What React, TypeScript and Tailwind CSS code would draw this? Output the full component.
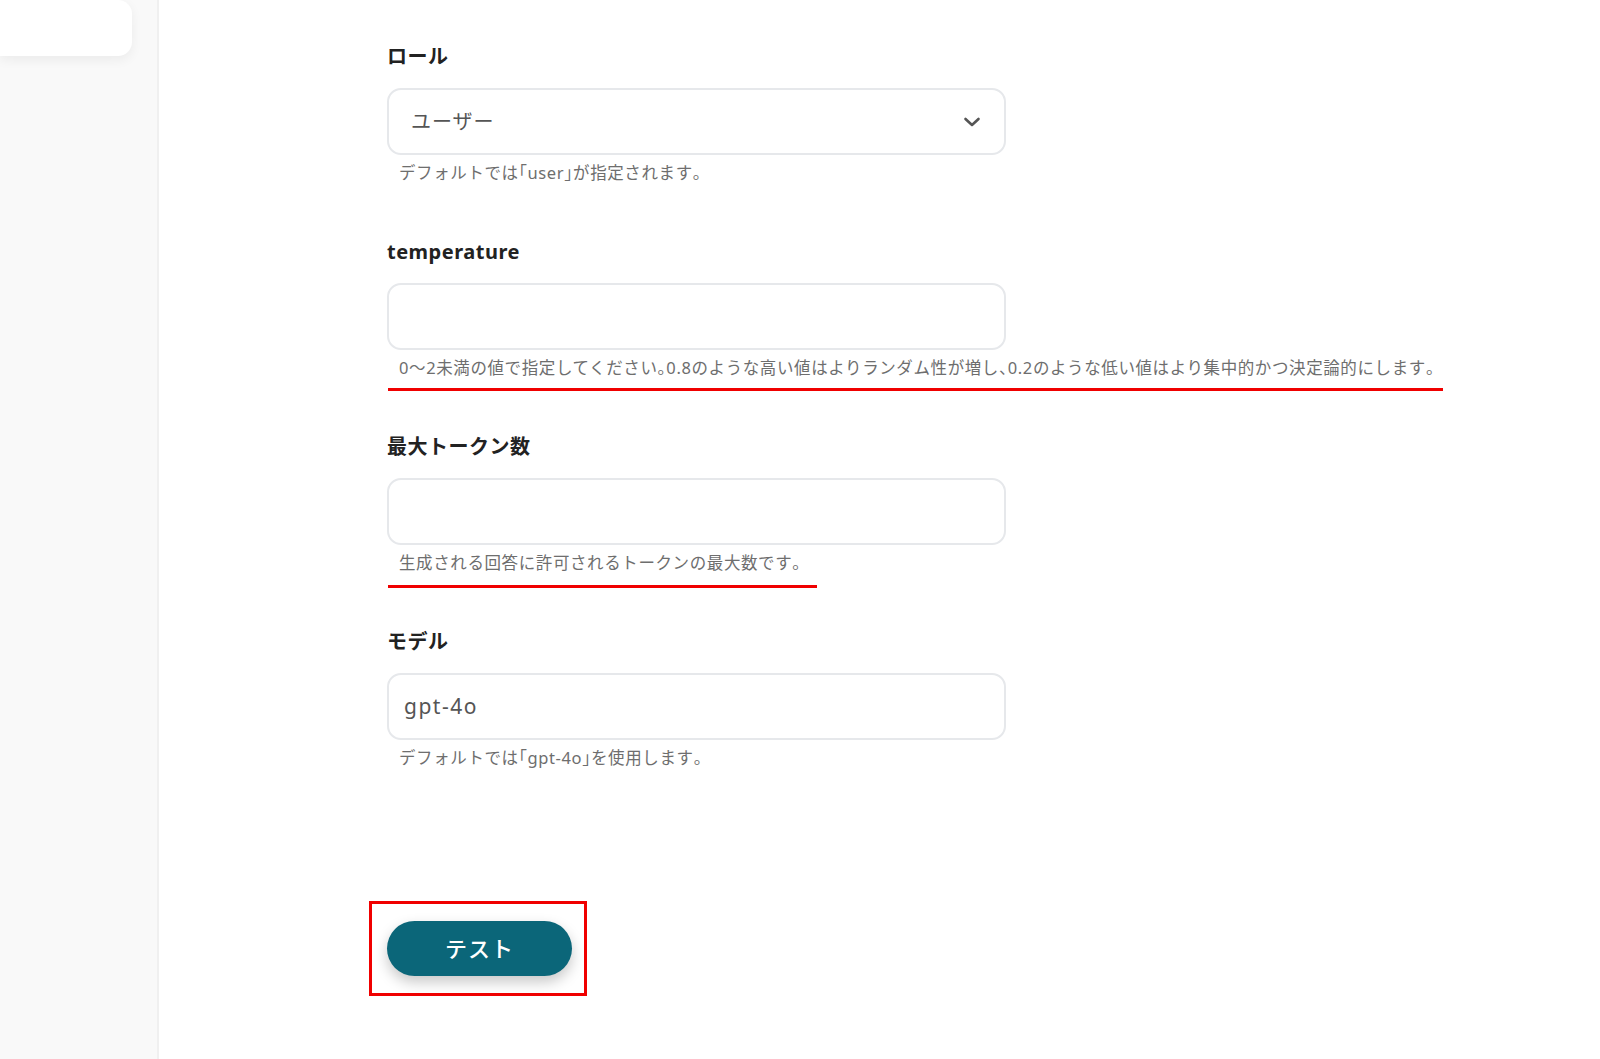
const font = { fontFamily: '"Noto Sans", "Noto Sans CJK JP", sans-serif' }

// full-width punctuation is set half-width, as in the reference
function Compact({ text }: { text: string }) {
  return (
    <>
      {text.split(/([「」。、])/).map((part, i) =>
        /^[「」。、]$/.test(part) ? (
          <span key={i} className="[font-feature-settings:'halt']">
            {part}
          </span>
        ) : (
          part
        )
      )}
    </>
  )
}

function Helper({ text, underline }: { text: string; underline?: { width: string; top: string } }) {
  return (
    <div className="relative mt-[6px]">
      <p className="pl-3 text-[16.5px] leading-6 tracking-[0.6px] text-[#6e6e6e] whitespace-nowrap">
        <Compact text={text} />
      </p>
      {underline && (
        <div className={`absolute left-[1px] h-[3px] bg-[#f00000] ${underline.width} ${underline.top}`} />
      )}
    </div>
  )
}

function Field({
  label,
  value,
  select,
  helper,
  underline,
}: {
  label: string
  value?: string
  select?: boolean
  helper: string
  underline?: { width: string; top: string }
}) {
  return (
    <div className="flex flex-col">
      <label className="text-[20px] leading-7 font-bold tracking-[0.5px] text-[#222]">{label}</label>
      <div className="mt-[17px] flex h-[67px] w-[619px] items-center justify-between rounded-[14px] border-2 border-[#e6e8eb] bg-white">
        <span
          className={`text-[#555] ${select ? "pl-[22px] text-[20px] tracking-[1px]" : "pl-[15px] text-[21px] tracking-[1.5px]"}`}
        >
          {value}
        </span>
        {select && (
          <svg className="mr-[23px]" width="18" height="12" viewBox="0 0 18 12" fill="none">
            <polyline points="2.5,3 9,9 15.5,3" stroke="#555" strokeWidth="2.6" strokeLinecap="round" strokeLinejoin="round" />
          </svg>
        )}
      </div>
      <Helper text={helper} underline={underline} />
    </div>
  )
}

export default function App() {
  return (
    <div className="flex h-[1059px] w-[1600px] overflow-hidden bg-white" style={font}>
      {/* Sidebar */}
      <div className="w-[159px] shrink-0 border-r-2 border-[#f0f0f0] bg-[#f9f9f9]">
        <div className="h-[56px] w-[132px] rounded-r-[14px] bg-white shadow-[0_4px_12px_rgba(0,0,0,0.06)]" />
      </div>

      {/* Form */}
      <div className="flex flex-1 flex-col pl-[228px] pt-[43px]">
        <div className="flex flex-col gap-[53px]">
          <Field label="ロール" value="ユーザー" select helper="デフォルトでは「user」が指定されます。" />
          <Field
            label="temperature"
            helper="0〜2未満の値で指定してください。0.8のような高い値はよりランダム性が増し、0.2のような低い値はより集中的かつ決定論的にします。"
            underline={{ width: "w-[1055px]", top: "top-[32px]" }}
          />
          <Field
            label="最大トークン数"
            helper="生成される回答に許可されるトークンの最大数です。"
            underline={{ width: "w-[429px]", top: "top-[34px]" }}
          />
          <Field label="モデル" value="gpt-4o" helper="デフォルトでは「gpt-4o」を使用します。" />
        </div>

        <div className="mt-[131px] -ml-[18px] w-[218px] border-[3px] border-[#f00000] pb-[17px] pl-[15px] pt-[17px]">
          <button className="flex h-[55px] w-[185px] items-center justify-center rounded-full bg-[#0b6679] text-[22px] font-medium tracking-[1px] text-white shadow-[0_6px_14px_rgba(0,0,0,0.22)]">
            テスト
          </button>
        </div>
      </div>
    </div>
  )
}
